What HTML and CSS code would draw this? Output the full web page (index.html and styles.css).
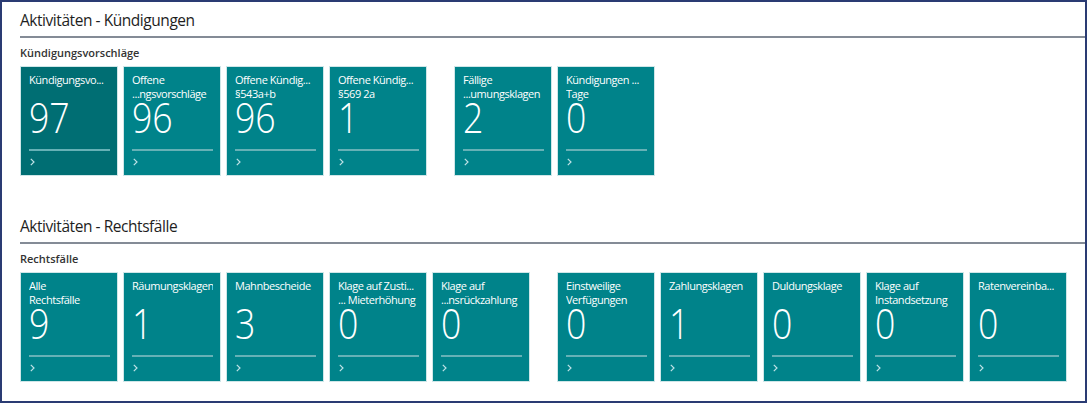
FILE: index.html
```html
<!DOCTYPE html>
<html lang="de">
<head>
  <meta charset="UTF-8" />
  <meta name="viewport" content="width=device-width, initial-scale=1.0" />
  <title>Aktivitäten</title>
  <link rel="stylesheet" href="styles.css">
</head>
<body>
  <div class="frame">
    <section class="part">
      <h2 class="part-title">Aktivitäten - Kündigungen</h2>
      <h3 class="group-title">Kündigungsvorschläge</h3>
      <div class="tiles">
        <div class="tile-group">
          <a class="tile tile-active" href="#">
            <div class="tile-name">Kündigungsvo...</div>
            <div class="tile-value">97</div>
            <div class="tile-rule"></div>
            <svg class="tile-more" width="5" height="8" viewBox="0 0 5 8"><polyline points="0.8,0.8 4,4 0.8,7.2" /></svg>
          </a>
          <a class="tile" href="#">
            <div class="tile-name">Offene<br>...ngsvorschläge</div>
            <div class="tile-value">96</div>
            <div class="tile-rule"></div>
            <svg class="tile-more" width="5" height="8" viewBox="0 0 5 8"><polyline points="0.8,0.8 4,4 0.8,7.2" /></svg>
          </a>
          <a class="tile" href="#">
            <div class="tile-name">Offene Kündig...<br>§543a+b</div>
            <div class="tile-value">96</div>
            <div class="tile-rule"></div>
            <svg class="tile-more" width="5" height="8" viewBox="0 0 5 8"><polyline points="0.8,0.8 4,4 0.8,7.2" /></svg>
          </a>
          <a class="tile" href="#">
            <div class="tile-name">Offene Kündig...<br>§569 2a</div>
            <div class="tile-value">1</div>
            <div class="tile-rule"></div>
            <svg class="tile-more" width="5" height="8" viewBox="0 0 5 8"><polyline points="0.8,0.8 4,4 0.8,7.2" /></svg>
          </a>
        </div>
        <div class="tile-group">
          <a class="tile" href="#">
            <div class="tile-name">Fällige<br>...umungsklagen</div>
            <div class="tile-value">2</div>
            <div class="tile-rule"></div>
            <svg class="tile-more" width="5" height="8" viewBox="0 0 5 8"><polyline points="0.8,0.8 4,4 0.8,7.2" /></svg>
          </a>
          <a class="tile" href="#">
            <div class="tile-name">Kündigungen ...<br>Tage</div>
            <div class="tile-value">0</div>
            <div class="tile-rule"></div>
            <svg class="tile-more" width="5" height="8" viewBox="0 0 5 8"><polyline points="0.8,0.8 4,4 0.8,7.2" /></svg>
          </a>
        </div>
      </div>
    </section>

    <section class="part part-next">
      <h2 class="part-title">Aktivitäten - Rechtsfälle</h2>
      <h3 class="group-title">Rechtsfälle</h3>
      <div class="tiles">
        <div class="tile-group">
          <a class="tile" href="#">
            <div class="tile-name">Alle<br>Rechtsfälle</div>
            <div class="tile-value">9</div>
            <div class="tile-rule"></div>
            <svg class="tile-more" width="5" height="8" viewBox="0 0 5 8"><polyline points="0.8,0.8 4,4 0.8,7.2" /></svg>
          </a>
          <a class="tile" href="#">
            <div class="tile-name">Räumungsklagen</div>
            <div class="tile-value">1</div>
            <div class="tile-rule"></div>
            <svg class="tile-more" width="5" height="8" viewBox="0 0 5 8"><polyline points="0.8,0.8 4,4 0.8,7.2" /></svg>
          </a>
          <a class="tile" href="#">
            <div class="tile-name">Mahnbescheide</div>
            <div class="tile-value">3</div>
            <div class="tile-rule"></div>
            <svg class="tile-more" width="5" height="8" viewBox="0 0 5 8"><polyline points="0.8,0.8 4,4 0.8,7.2" /></svg>
          </a>
          <a class="tile" href="#">
            <div class="tile-name">Klage auf Zusti...<br>... Mieterhöhung</div>
            <div class="tile-value">0</div>
            <div class="tile-rule"></div>
            <svg class="tile-more" width="5" height="8" viewBox="0 0 5 8"><polyline points="0.8,0.8 4,4 0.8,7.2" /></svg>
          </a>
          <a class="tile" href="#">
            <div class="tile-name">Klage auf<br>...nsrückzahlung</div>
            <div class="tile-value">0</div>
            <div class="tile-rule"></div>
            <svg class="tile-more" width="5" height="8" viewBox="0 0 5 8"><polyline points="0.8,0.8 4,4 0.8,7.2" /></svg>
          </a>
        </div>
        <div class="tile-group">
          <a class="tile" href="#">
            <div class="tile-name">Einstweilige<br>Verfügungen</div>
            <div class="tile-value">0</div>
            <div class="tile-rule"></div>
            <svg class="tile-more" width="5" height="8" viewBox="0 0 5 8"><polyline points="0.8,0.8 4,4 0.8,7.2" /></svg>
          </a>
          <a class="tile" href="#">
            <div class="tile-name">Zahlungsklagen</div>
            <div class="tile-value">1</div>
            <div class="tile-rule"></div>
            <svg class="tile-more" width="5" height="8" viewBox="0 0 5 8"><polyline points="0.8,0.8 4,4 0.8,7.2" /></svg>
          </a>
          <a class="tile" href="#">
            <div class="tile-name">Duldungsklage</div>
            <div class="tile-value">0</div>
            <div class="tile-rule"></div>
            <svg class="tile-more" width="5" height="8" viewBox="0 0 5 8"><polyline points="0.8,0.8 4,4 0.8,7.2" /></svg>
          </a>
          <a class="tile" href="#">
            <div class="tile-name">Klage auf<br>Instandsetzung</div>
            <div class="tile-value">0</div>
            <div class="tile-rule"></div>
            <svg class="tile-more" width="5" height="8" viewBox="0 0 5 8"><polyline points="0.8,0.8 4,4 0.8,7.2" /></svg>
          </a>
          <a class="tile" href="#">
            <div class="tile-name">Ratenvereinba...</div>
            <div class="tile-value">0</div>
            <div class="tile-rule"></div>
            <svg class="tile-more" width="5" height="8" viewBox="0 0 5 8"><polyline points="0.8,0.8 4,4 0.8,7.2" /></svg>
          </a>
        </div>
      </div>
    </section>
  </div>
</body>
</html>
```

FILE: styles.css
```css
body {
  margin: 0;
  background: #fff;
  font-family: "Open Sans", "Noto Sans", sans-serif;
  color: #262626;
}
.frame {
  box-sizing: border-box;
  width: 1087px;
  height: 403px;
  border: 2px solid #2a3b73;
  padding: 7px 0 0 18px;
}
.part-title {
  margin: 0;
  padding-bottom: 5px;
  font-size: 15.5px;
  line-height: 22px;
  font-weight: 500;
  letter-spacing: -0.45px;
  color: #1e1e1e;
  border-bottom: 2px solid #848b96;
}
.part-next {
  margin-top: 39px;
}
.group-title {
  margin: 8px 0 0;
  font-size: 11px;
  line-height: 14px;
  font-weight: 600;
  color: #333;
}
.tiles {
  display: flex;
  margin-top: 6px;
}
.tile-group {
  display: flex;
  gap: 5px;
}
.tile-group + .tile-group {
  margin-left: 27px;
}
.tile {
  box-sizing: border-box;
  display: flex;
  flex-direction: column;
  width: 98px;
  height: 110px;
  padding: 7px 8px 0 9px;
  background: #00838a;
  color: #fff;
  text-decoration: none;
  outline: 1px solid #cfe6e8;
  outline-offset: -1px;
}
.tile-active {
  background: #006e73;
}
.tile-name {
  height: 28px;
  font-size: 11px;
  line-height: 14px;
  letter-spacing: -0.45px;
  white-space: nowrap;
  overflow: hidden;
}
.tile-value {
  font-size: 43px;
  line-height: 32px;
  font-weight: 300;
  transform: scaleX(0.83);
  transform-origin: left center;
}
.tile-rule {
  height: 2px;
  margin-top: 16px;
  background: #66b1b6;
}
.tile-more {
  display: block;
  margin: 7px 0 0 1px;
}
.tile-more polyline {
  fill: none;
  stroke: #bfe2e6;
  stroke-width: 1.2;
}
```
